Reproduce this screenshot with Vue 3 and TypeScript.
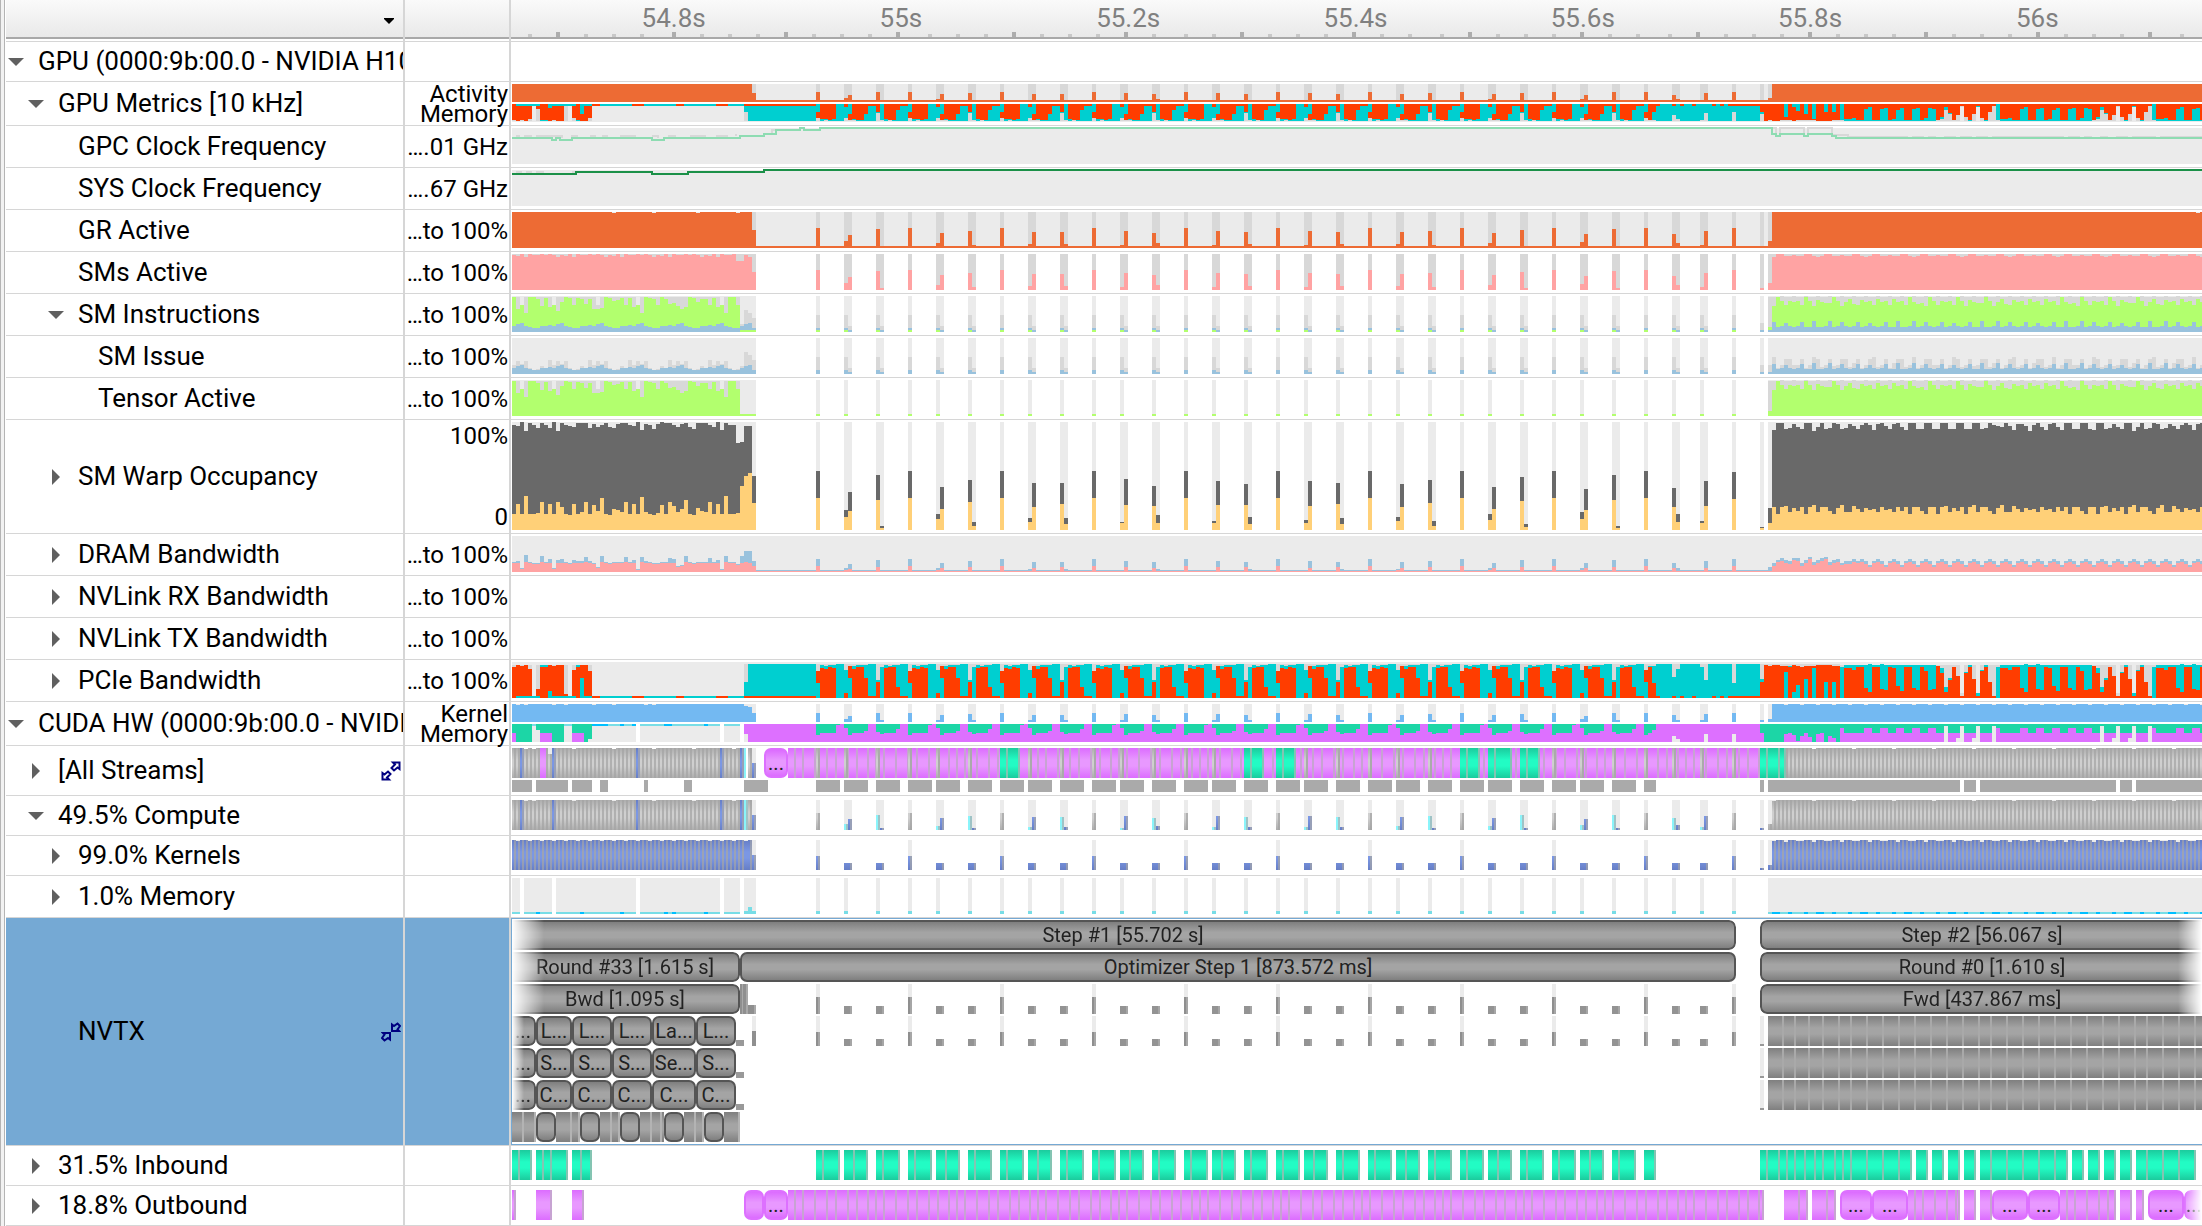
<script setup lang="ts">
type Box = [x: number, width: number, top: number, height: number]
type Heights = Record<number, number>
interface Layer { fill: string; d: string }
interface Span { width: number; text?: string; kind: string }
interface Track { height: number; layers: Layer[]; spans: Span[] }
interface Row {
  name: string
  level: number
  arrow?: 'open' | 'closed'
  icon?: 'expand' | 'collapse'
  values?: string[]
  kind: string
  tracks: Track[]
}

const WIDTH = 1690
const CELL = 4
const LAST = 422
const LIGHT = '#ebebeb'
const DARK = '#d8d8d8'
const ORANGE = '#ed6b34'
const PINK = '#ffa3a3'
const LIME = '#b2ff6e'
const BLUE = '#99c2dd'
const CYAN = '#00cfd0'
const RED = '#ff3d00'
const PURPLE = '#dd70ff'
const TEAL = '#1cd6a6'
const AQUA = '#78dde6'

const layer = (fill: string, boxes: Box[]): Layer => ({
  fill,
  d: boxes.map(([x, w, y, h]) => `M${x} ${y}h${w}v${h}h${-w}z`).join(''),
})
const range = (from: number, to: number) => Array.from({ length: to - from + 1 }, (_, i) => from + i)
const up = (fill: string, h: Heights, total: number): Layer =>
  layer(fill, Object.keys(h).map(Number).map((i): Box => [i * CELL, CELL, total - h[i], h[i]]))
const down = (fill: string, h: Heights): Layer =>
  layer(fill, Object.keys(h).map(Number).map((i): Box => [i * CELL, CELL, 0, h[i]]))
const full = (cells: number[], h: number): Heights => Object.fromEntries(cells.map((i) => [i, h]))
const scale = (h: Heights, f: number, min = 1): Heights =>
  Object.fromEntries(Object.entries(h).map(([i, v]) => [i, Math.max(min, Math.round(v * f))]))
const ground = (fill: string, h: number): Layer => layer(fill, [[0, WIDTH, 0, h]])
const track = (height: number, layers: Layer[], spans: Span[] = []): Track => ({ height, layers, spans })

// Short bursts between the two busy phases: [cell, total occupancy, active occupancy]
const pairs = [
  [20, 13, 38, 19, 55, 30, 4, 2],
  [16, 11, 43, 21, 50, 28, 8, 4],
  [12, 8, 47, 23, 47, 26, 12, 6],
  [8, 7, 51, 25, 44, 24, 15, 7],
  [9, 7, 49, 25, 46, 25, 13, 6],
  [10, 7, 49, 24, 47, 26, 12, 6],
  [13, 9, 46, 23, 50, 27, 9, 4],
  [16, 10, 43, 21, 53, 29, 6, 3],
  [18, 11, 41, 20, 55, 30, 4, 2],
]
const bursts: number[][] = []
const singles: number[] = []
const firsts: number[] = []
const seconds: number[] = []
pairs.forEach((p, k) => {
  const a = 76 + 23 * k
  bursts.push([a, 59, 32], [a + 7, p[0], p[1]], [a + 8, p[2], p[3]], [a + 15, p[4], p[5]], [a + 16, p[6], p[7]])
  singles.push(a)
  firsts.push(a + 7, a + 15)
  seconds.push(a + 8, a + 16)
})
bursts.push([283, 59, 32], [290, 42, 23], [291, 16, 8], [297, 9, 7], [298, 49, 24], [305, 58, 31], [312, 3, 2], [314, 22, 7])
singles.push(283, 305)
firsts.push(290, 297)
seconds.push(291, 298)
const burstCells = bursts.map((b) => b[0])
const burstHeights = (f: number, min: number): Heights =>
  Object.fromEntries(bursts.map(([i, h]) => [i, Math.max(min, Math.round(h * f))]))

const left = range(0, 60)
const right = range(315, LAST)
const busy = [...left, ...burstCells, ...right]

// SM warp occupancy
const gapLeft = [3, 4, 0, 9, 1, 3, 6, 1, 3, 6, 0, 9, 1, 3, 4, 5, 1, 1, 1, 6, 2, 5, 3, 1, 5, 6, 2, 1, 1, 3, 4, 0, 8, 2, 3, 7, 2, 0, 1, 1, 3, 5, 2, 1, 5, 7, 1, 1, 1, 3, 5, 0, 8, 1, 3, 3, 21, 20, 4, 4, 54]
const warmLeft = [16, 26, 16, 34, 16, 16, 17, 28, 16, 26, 16, 28, 23, 16, 15, 26, 16, 18, 28, 16, 25, 19, 32, 16, 15, 21, 20, 18, 28, 16, 26, 16, 33, 18, 16, 15, 17, 25, 16, 28, 24, 18, 21, 30, 16, 15, 22, 19, 18, 28, 16, 26, 16, 34, 16, 16, 17, 44, 54, 57, 27]
const gapRight = [8, 1, 1, 7, 6, 2, 5, 7, 1, 1, 9, 5, 1, 7, 6, 1, 2, 7, 6, 2, 4, 7, 3, 1, 3, 8, 2, 1, 4, 7, 2, 1, 5, 8, 1, 1, 7, 7, 1, 1, 7, 7, 1, 1, 7, 7, 1, 1, 7, 7, 1, 1, 7, 6, 1, 3, 4, 5, 1, 4, 8, 2, 2, 4, 9, 3, 1, 5, 8, 2, 1, 5, 8, 1, 1, 7, 7, 1, 1, 7]
const warmRight = [23, 16, 23, 24, 18, 22, 19, 23, 16, 23, 25, 18, 23, 23, 19, 16, 22, 25, 18, 18, 24, 21, 18, 22, 20, 21, 18, 23, 20, 21, 18, 23, 19, 23, 16, 23, 23, 19, 16, 23]
const warpTop: Heights = {}
const warpWarm: Heights = {}
left.forEach((i) => { warpTop[i] = 108 - gapLeft[i]; warpWarm[i] = warmLeft[i] })
bursts.forEach(([i, h, w]) => { warpTop[i] = h; warpWarm[i] = w })
right.forEach((i) => {
  warpTop[i] = 108 - gapRight[(i - 315) % gapRight.length]
  warpWarm[i] = warmRight[(i - 315) % warmRight.length]
})

// GR and SM activity
const grHeights: Heights = { ...full(range(0, 59), 36), 60: 18, ...burstHeights(0.34, 2), ...full(right, 36) }
;[25, 35, 46, 56, 421].forEach((i) => { grHeights[i] = 35 })
const smsHeights: Heights = { ...burstHeights(0.34, 2) }
left.forEach((i) => { smsHeights[i] = 36 - [1, 2, 0, 3, 0, 1, 1, 0, 1, 0, 1, 3][i % 12] })
smsHeights[56] = 29
smsHeights[57] = 29
smsHeights[60] = 18
right.forEach((i) => { smsHeights[i] = i === 315 ? 33 : 36 - [0, 0, 2, 2, 1, 2, 2, 0, 0, 2, 3, 2][(i - 316) % 12] })

// Tensor pipe and instruction issue
const tensorGap = [1, 13, 9, 17, 1, 1, 3, 10, 2, 11, 9, 15, 6, 1, 2, 9, 2, 3, 8, 3, 13, 13, 12, 1, 2, 5, 4, 2, 9, 2, 11, 9, 17, 1, 2, 3, 9, 1, 3, 8, 7, 10, 13, 11, 1, 2, 6, 3, 3, 9, 2, 11, 9, 17, 1, 1, 9]
const tensorGapRight = [10, 1, 5, 9, 5, 6, 5, 9, 1, 5, 10, 4, 6, 7, 7, 1, 5, 10, 6, 3, 8, 9, 4, 6, 5, 9, 3, 6, 5, 9, 3, 6, 5, 9, 1, 6, 8, 7]
const tensor: Heights = {}
const tensorMax: Heights = {}
const issue: Heights = {}
const issueMax: Heights = {}
left.forEach((i) => {
  tensor[i] = i < 57 ? 36 - tensorGap[i] : 2
  tensorMax[i] = i < 57 ? ([2, 10, 21, 31, 52].includes(i) ? 27 : 35) : 2
  issue[i] = i < 57 ? [6, 8, 9, 6, 5, 4, 4, 6, 6, 7][i % 10] : [6, 8, 9, 4][i - 57]
  issueMax[i] = i < 57 ? [9, 13, 10, 13, 6, 4, 5, 8, 6, 14][i % 10] : [8, 22, 19, 14][i - 57]
})
right.forEach((i) => {
  tensor[i] = 36 - tensorGapRight[(i - 315) % tensorGapRight.length]
  tensorMax[i] = [35, 35, 36][i % 3]
  issue[i] = [10, 5, 6, 9, 6, 5, 6, 10, 5, 5, 11, 5, 5, 6, 11, 5, 6, 10, 6, 5, 6][(i - 315) % 21]
  issueMax[i] = [15, 6, 9, 15, 15, 7, 9][(i - 315) % 7] + (i % 5 === 0 ? 2 : 0)
})
const tensorCells = [...singles, ...firsts]
tensorCells.forEach((i) => { tensor[i] = 2; issue[i] = 4; issueMax[i] = 17 })
seconds.forEach((i) => { issue[i] = 2; issueMax[i] = 6 })
issue[312] = 2
issueMax[312] = 9
issue[314] = 2
issueMax[314] = 9
tensor[314] = 5
tensorMax[314] = 35
const instrMax: Heights = { ...issueMax }
range(0, 56).forEach((i) => { instrMax[i] = tensorMax[i] })
range(314, LAST).forEach((i) => { instrMax[i] = tensorMax[i] })
const instrTensor: Heights = Object.fromEntries([...range(0, 56), ...range(314, LAST)].map((i) => [i, tensor[i]]))
const instrLow: Heights = full([57, 58, 59, 60, ...tensorCells], 2)

// DRAM
const dramTop: Heights = full(range(0, LAST), 2)
const dramRead: Heights = full(range(0, LAST), 1)
const dramLeft = [10, 11, 4, 17, 10, 9, 9, 16, 10, 13, 4, 12, 13, 10, 9, 12, 11, 11, 15, 11, 9, 5, 16, 10, 9, 10, 10, 10, 15, 10, 12, 3, 15, 11, 10, 9, 9, 10, 10, 14, 13, 6, 7, 16, 10, 9, 10, 10, 10, 14, 10, 12, 3, 16, 10, 10, 8, 16, 21, 21, 11]
dramLeft.forEach((h, i) => {
  dramTop[i] = h
  dramRead[i] = i > 56 ? [9, 10, 9, 6][i - 57] : h > 14 ? 10 : h > 10 ? 9 : Math.max(2, h - 1)
})
bursts.forEach(([i, h, w]) => { dramTop[i] = Math.max(2, Math.round(h * 0.22)); dramRead[i] = Math.max(1, Math.round(w * 0.18)) })
const dramStart = [9, 12, 14, 12, 11, 14, 14, 9, 12, 15, 10, 12, 14, 15, 10, 12, 13, 9, 11, 11, 13]
right.forEach((i) => {
  const n = i - 315
  dramTop[i] = n < 21 ? dramStart[n] : [7, 11, 13, 11][n % 4]
  dramRead[i] = dramTop[i] - (n % 4 === 1 ? 2 : 3)
  if (dramTop[i] === 7) dramRead[i] = 5
})

// PCIe: grey maximum, then two directions, the lower one painted last
const peak: Heights = {}
const rx: Heights = {}
const tx: Heights = {}
const frontRx: Heights = {}
const frontTx: Heights = {}
const pcie = (i: number, r: number, c: number, p = 34) => {
  if (i > LAST) return
  peak[i] = p
  if (r > c) { rx[i] = r; if (c) frontTx[i] = c } else { tx[i] = c; if (r) frontRx[i] = r }
}
const pcieLeft: number[][] = [
  [31, 0], [33, 2], [32, 2], [33, 2], [29, 2], [0, 2], [9, 2], [31, 33], [31, 33], [33, 7], [32, 2], [33, 2], [33, 2], [4, 2], [0, 2],
  [28, 2], [31, 33], [33, 20], [33, 2], [27, 2],
]
pcieLeft.forEach(([r, c], i) => pcie(i, r, c, i === 5 || i === 14 ? 2 : 33))
range(20, 57).forEach((i) => {
  const red = [20, 21, 30, 31, 32, 41, 42, 51, 52, 53].includes(i)
  pcie(i, red ? 2 : 0, red ? 0 : 2, 2)
})
pcie(58, 2, 16)
range(59, 75).forEach((i) => pcie(i, 2, 34))
const pciePeriod: number[][] = [
  [27, 15], [30, 33], [29, 32], [31, 33], [30, 33], [0, 34], [0, 34], [5, 28], [32, 20], [29, 32], [31, 33], [31, 33],
  [20, 33], [2, 34], [2, 34], [16, 18], [0, 31], [30, 33], [31, 32], [31, 33], [11, 33], [2, 34], [2, 34],
]
range(76, 282).forEach((i) => { const [r, c] = pciePeriod[(i - 76) % 23]; pcie(i, r, c) })
pcie(283, 28, 16)
pcie(284, 31, 32)
pcie(285, 15, 32)
range(286, 311).forEach((i) => pcie(i, [286, 290, 292, 295, 300, 302].includes(i) || i > 303 ? 2 : 0, 34))
pcie(290, 2, 21)
pcie(291, 0, 29)
pcie(297, 0, 31)
pcie(298, 0, 18)
pcie(305, 2, 15)
pcie(312, 16, 19)
const pcieBusy: number[][] = [
  [33, 0], [32, 0], [33, 0], [33, 0], [32, 0], [32, 26], [31, 32], [33, 6], [32, 13], [31, 0], [32, 19], [32, 0], [32, 30], [33, 0],
  [33, 0], [33, 16], [33, 0], [32, 16], [32, 0],
]
pcieBusy.forEach(([r, c], n) => pcie(313 + n, r, c))
const pcieLoop: number[][] = [
  [0, 31], [30, 33], [30, 33], [28, 33], [31, 33], [31, 33], [10, 33], [6, 34], [31, 33], [31, 33], [9, 34], [8, 33], [31, 33],
  [30, 33], [12, 33], [7, 33], [31, 33], [31, 33], [10, 33], [8, 33], [31, 33], [27, 33], [8, 33], [9, 33], [32, 0], [25, 30],
  [6, 11], [18, 20], [31, 0], [22, 0], [2, 0], [25, 26], [31, 33], [19, 0], [2, 5], [27, 28], [31, 33], [16, 0], [2, 0],
]
range(332, LAST).forEach((i) => {
  const n = (i - 332) % 39
  const [r, c] = pcieLoop[n]
  pcie(i, r, c, n === 30 || n === 34 ? 5 : 33)
})
const half = (h: Heights) => scale(h, 0.5, 2)

// CUDA memory operations, hanging from the top
const h2d: Heights = {}
const d2h: Heights = {}
const small: Heights = full([...range(0, 57).filter((i) => ![31, 52, 57].includes(i))], 2)
;[0, 1, 2, 3, 4, 6, 7, 8, 9, 10, 11, 12, 15, 16, 17, 18, 19].forEach((i) => { h2d[i] = i === 19 ? 15 : i === 6 ? 6 : 18 })
;[0, 7, 8, 9, 15, 16, 17].forEach((i) => { d2h[i] = 9 })
const mixed = [11, 9, 9, 9, 9, 1, 0, 4, 11, 9, 9, 9, 7, 0, 0, 8, 10, 9, 9, 9, 5, 0, 0]
range(76, 282).forEach((i) => { h2d[i] = mixed[(i - 76) % 23] })
Object.assign(h2d, { 283: 11, 284: 9, 285: 6, 312: 9 })
const purpleDown: Heights = { 58: 10, ...full(range(59, 312), 18), 290: 12, 291: 15, 298: 10, 305: 10 }
const tealBusy = [18, 18, 18, 18, 18, 10, 9, 11, 17, 12, 9, 13, 18, 10, 9, 18, 12, 14, 18]
tealBusy.forEach((h, n) => { h2d[313 + n] = h; purpleDown[313 + n] = 18 })
range(332, LAST).forEach((i) => {
  const n = (i - 332) % 39
  const r = pcieLoop[n][0]
  const idle = [26, 30, 34, 38].includes(n)
  h2d[i] = idle ? 2 : r < 15 ? 4 : 9
  purpleDown[i] = idle ? 2 : n === 29 || n === 33 ? 14 : 18
})

// Kernel summary
const kernel: Heights = { ...burstHeights(0.155, 2), ...full(right, 18) }
left.forEach((i) => { kernel[i] = [1, 3, 10, 13, 20, 25, 33, 35].includes(i) ? 17 : 18 })
kernel[58] = 16
kernel[59] = 15
kernel[60] = 9
right.forEach((i) => { if (i % 4 === 2) kernel[i] = 17 })

// Compute streams
const streamMarks = [2, 10, 31, 52, 57]
const greyLeft = range(0, 59).filter((i) => !streamMarks.includes(i) && i !== 58)
const stripes = (fill: string, h: Heights, total: number): Layer =>
  layer(fill, Object.keys(h).map(Number).map((i): Box => [i * CELL + 2, 2, total - h[i], h[i]]))
const trimmed = (cells: number[], h: number): Heights =>
  Object.fromEntries(cells.map((i) => [i, i % 10 === 5 || i === 3 ? h - 1 : h]))
const computeGrey: Heights = { ...trimmed(greyLeft, 30), ...full(singles, 17), 314: 6, ...trimmed(right, 30) }
const streamsBusy: Heights = { ...trimmed(greyLeft, 30), 9: 24, ...trimmed(range(318, LAST), 30) }
const computeBlue: Heights = { ...full(streamMarks, 30), 60: 15, 312: 2, 291: 5, 298: 14 }
const computeCyan: Heights = { 58: 30, 290: 12, 297: 3 }
pairs.forEach((p, k) => {
  const a = 76 + 23 * k
  computeCyan[a + 7] = Math.round(p[0] * 0.28)
  computeBlue[a + 8] = Math.round(p[2] * 0.28)
  computeCyan[a + 15] = Math.round(p[4] * 0.28)
  computeBlue[a + 16] = Math.max(2, Math.round(p[6] * 0.25))
})
const kernels: Heights = { ...full(range(0, 59), 30), 60: 15, ...full(singles, 14), ...full([...firsts, ...seconds], 7), 312: 2, 314: 5, ...full(right, 30) }
right.forEach((i) => { kernels[i] = [29, 30, 30, 28, 30, 30, 29][i % 7] })
range(0, 59).forEach((i) => { if (i % 3 === 1) kernels[i] = 29 })
const kernelStripes: Heights = Object.fromEntries(Object.entries(kernels).filter(([i]) => !firsts.includes(+i) && +i !== 58))

// Memory copies
const copyGroups = (h: number): Box[] => {
  const out: Box[] = []
  singles.slice(0, 9).forEach((a) => [0, 7, 15].forEach((o) => out.push([(a + o) * CELL, 24, 0, h])))
  out.push([1132, 12, 0, h])
  return out
}
const rail: Box[] = [[0, 20, 0, 12], [24, 32, 0, 12], [60, 20, 0, 12], [88, 8, 0, 12], [132, 4, 0, 12], [172, 8, 0, 12], [232, 24, 0, 12],
  ...copyGroups(12), [1248, 4, 0, 12], [1256, 192, 0, 12], [1452, 12, 0, 12], [1468, 136, 0, 12], [1608, 12, 0, 12], [1624, 66, 0, 12]]
const box30 = (spans: number[][]): Box[] => spans.map(([a, b]) => [a, b - a, 0, 30])
const inboundRight = [[1248, 1400], [1404, 1416], [1420, 1432], [1436, 1448], [1452, 1464], [1468, 1556], [1560, 1572], [1576, 1588], [1592, 1604], [1608, 1620], [1624, 1684]]
const inbound: Box[] = [...box30([[0, 20], [24, 56], [60, 80]]), ...copyGroups(30), ...box30(inboundRight)]
const inboundCuts = [6, 30, 38, 68, 1254, 1266, 1274, 1282, 1292, 1302, 1310, 1322, 1330, 1338, 1354, 1370, 1386, 1478, 1494, 1510, 1526, 1542, 1634, 1650, 1666]
const inboundSeams: Box[] = [
  ...inbound.map(([x, w]): Box => [x + w - 2, 2, 0, 30]),
  ...copyGroups(30).slice(0, 27).map(([x], n): Box => [x + [6, 9, 6][n % 3], 2, 0, 30]),
  ...inboundCuts.map((x): Box => [x, 2, 0, 30]),
]
const seams = (from: number, to: number): Box[] => {
  const out: Box[] = []
  const steps = [8, 12, 12, 9, 12, 9, 11, 8]
  for (let x = from + 6, n = 0; x < to - 2; x += steps[n % 8], n++) out.push([x, 2, 0, 30])
  out.push([to - 2, 2, 0, 30])
  return out
}
const outSpans = [[0, 4], [24, 40], [60, 72], [276, 1252], [1272, 1296], [1300, 1324], [1396, 1448], [1452, 1464], [1468, 1480], [1548, 1604], [1608, 1620], [1624, 1632]]
const outSeams: Box[] = [[2, 2, 0, 30], [38, 2, 0, 30], [70, 2, 0, 30], ...seams(276, 1252), ...seams(1272, 1296).slice(1), ...seams(1300, 1324).slice(1),
  ...seams(1396, 1448), [1462, 2, 0, 30], [1478, 2, 0, 30], ...seams(1548, 1604), [1618, 2, 0, 30], [1630, 2, 0, 30]]
const streamTeal = [[488, 508], [732, 752], [764, 784], [948, 968], [976, 1000], [1008, 1028], [1248, 1274]]
const tealStarts = streamTeal.map((s) => s[0] / CELL)
const streamGrey = [...singles, ...firsts].filter((i) => !tealStarts.includes(i))
const tealSeams: Box[] = streamTeal.flatMap(([a, b]): Box[] => [[a + 6, 2, 0, 30], [b - 2, 2, 0, 30]])
tealSeams.push([1266, 2, 0, 30])

const memCells = range(0, 60).filter((i) => !streamMarks.includes(i))
const memPoints = [...singles, ...firsts]
const memBusy = range(314, LAST)

// NVTX detail rows
const gap = (width: number): Span => ({ width, kind: 'gap' })
const bar = (width: number, text: string, kind = 'grey'): Span => ({ width, text, kind })
const nvtxCuts = [1270, 1282, 1296, 1310, 1326, 1338, 1354, 1370, 1386, 1402, 1418, 1434, 1450, 1466, 1478, 1494, 1510, 1526, 1542, 1558, 1574, 1590, 1606, 1622, 1634, 1650, 1666, 1682]
const dense = (): Layer[] => [
  layer(LIGHT, [[1248, 4, 0, 28]]),
  layer('#999999', [[1248, 4, 28, 2], [224, 8, 24, 6]]),
  layer('url(#ash)', [[1256, 434, 0, 30]]),
  layer('#a9a9a9', nvtxCuts.map((x): Box => [x, 2, 0, 30])),
]
const ticks = (single: number, pair: number): Layer[] => [
  up(LIGHT, full(singles, 30), 30),
  up('#8f8f8f', full(singles, single), 30),
  up('#939393', full([...firsts, ...seconds], pair), 30),
  stripes('#a6a6a6', { ...full(singles, single), ...full(seconds, pair) }, 30),
]
const pieces = (texts: string[]): Span[] =>
  [24, 36, 40, 40, 44, 40].map((w, i) => bar(w, texts[i], i ? 'grey' : 'grey cut-left')).concat(gap(1466))
const pills: Span[] = [gap(24)]
;[24, 20, 24, 20].forEach((g) => pills.push(bar(20, ''), gap(g)))
pills.push(bar(20, ''), gap(1478))
const pillCuts = [10, 22, 58, 66, 98, 106, 138, 148, 182, 190, 226]

const gpcLine = 'M0 10H40V12H44V10H48V12H60V10H140V12H152V10H228V8H252V6H264V2H288V0H292V2H308V0H1260V6H1264V8H1268V6H1292V8H1296V6H1320V8H1324V10H1690'
const gpcMax = 'M4 8H8M12 8H20M24 8H50V10M60 10V8H66M78 8H84M90 8H96M108 8H124M140 8H146V10M156 8H164M178 8H194M204 8H216M224 8V6M260 6V2H264M1260 0H1264V8M1268 8V0H1292V8M1296 8V0H1320V7H1336V9H1396M1400 9H1412M1416 9H1424M1432 9H1444M1448 9H1460M1464 9H1476M1480 9H1552M1556 9H1568M1572 9H1580M1588 9H1596M1604 9H1616M1620 9H1644M1648 9H1690'
const sysLine = 'M0 4H64V2H140V4H176V2H252V0H1690'

const percent = ['…to 100%']
const rows: Row[] = [
  { name: 'GPU (0000:9b:00.0 - NVIDIA H100', level: 0, arrow: 'open', kind: 'short', tracks: [] },
  {
    name: 'GPU Metrics [10 kHz]', level: 1, arrow: 'open', values: ['Activity', 'Memory'], kind: 'double',
    tracks: [
      track(18, [ground(LIGHT, 18), up(DARK, full([60, ...burstCells], 18), 18), layer(ORANGE, [[0, WIDTH, 16, 2]]), up(ORANGE, scale(grHeights, 0.5, 2), 18)]),
      track(18, [ground(LIGHT, 18), down(DARK, half(peak)), down(RED, half(rx)), down(CYAN, half(tx)), down(RED, half(frontRx)), down(CYAN, half(frontTx))]),
    ],
  },
  { name: 'GPC Clock Frequency', level: 2, values: ['….01 GHz'], kind: 'normal gpc', tracks: [track(36, [ground(LIGHT, 36)])] },
  { name: 'SYS Clock Frequency', level: 2, values: ['….67 GHz'], kind: 'normal sys', tracks: [track(36, [ground(LIGHT, 36)])] },
  {
    name: 'GR Active', level: 2, values: percent, kind: 'normal',
    tracks: [track(36, [ground(LIGHT, 36), up(DARK, full([60, ...burstCells], 36), 36), layer(ORANGE, [[0, WIDTH, 34, 2]]), up(ORANGE, grHeights, 36)])],
  },
  { name: 'SMs Active', level: 2, values: percent, kind: 'normal', tracks: [track(36, [up(DARK, full(busy, 36), 36), up(PINK, smsHeights, 36)])] },
  {
    name: 'SM Instructions', level: 2, arrow: 'open', values: percent, kind: 'normal',
    tracks: [track(36, [up(LIGHT, full(busy, 36), 36), up(DARK, instrMax, 36), up(LIME, instrTensor, 36), up(BLUE, issue, 36), up(LIME, instrLow, 36)])],
  },
  { name: 'SM Issue', level: 3, values: percent, kind: 'normal', tracks: [track(36, [up(LIGHT, full(busy, 36), 36), up(DARK, issueMax, 36), up(BLUE, issue, 36)])] },
  {
    name: 'Tensor Active', level: 3, values: percent, kind: 'normal',
    tracks: [track(36, [up(LIGHT, full([...left, ...tensorCells, 314, ...right], 36), 36), up(DARK, tensorMax, 36), up(LIME, tensor, 36)])],
  },
  {
    name: 'SM Warp Occupancy', level: 2, arrow: 'closed', values: ['100%', '0'], kind: 'scale',
    tracks: [track(108, [up(LIGHT, full(busy, 108), 108), up('#696969', warpTop, 108), up('#ffd078', warpWarm, 108)])],
  },
  { name: 'DRAM Bandwidth', level: 2, arrow: 'closed', values: percent, kind: 'normal', tracks: [track(36, [ground(LIGHT, 36), up(BLUE, dramTop, 36), up(PINK, dramRead, 36)])] },
  { name: 'NVLink RX Bandwidth', level: 2, arrow: 'closed', values: percent, kind: 'normal', tracks: [track(36, [])] },
  { name: 'NVLink TX Bandwidth', level: 2, arrow: 'closed', values: percent, kind: 'normal', tracks: [track(36, [])] },
  {
    name: 'PCIe Bandwidth', level: 2, arrow: 'closed', values: percent, kind: 'normal',
    tracks: [track(36, [ground(LIGHT, 36), up(DARK, peak, 36), up(RED, rx, 36), up(CYAN, tx, 36), up(RED, frontRx, 36), up(CYAN, frontTx, 36)])],
  },
  {
    name: 'CUDA HW (0000:9b:00.0 - NVIDIA', level: 0, arrow: 'open', values: ['Kernel', 'Memory'], kind: 'double',
    tracks: [
      track(18, [up(LIGHT, full(busy, 18), 18), up('#73b9f2', kernel, 18)]),
      track(18, [
        up(LIGHT, full([...range(0, 30), ...range(32, 51), ...range(53, 56), ...range(58, LAST)], 18), 18),
        down(AQUA, small), layer('#00bfff', [[80, 16, 0, 2], [108, 4, 0, 2], [120, 4, 0, 2], [152, 8, 0, 2], [192, 4, 0, 2]]),
        down(PURPLE, purpleDown), down(TEAL, h2d), up(PURPLE, d2h, 18),
      ]),
    ],
  },
  {
    name: '[All Streams]', level: 1, arrow: 'closed', icon: 'expand', kind: 'streams',
    tracks: [
      track(30, [
        up(LIGHT, full([9, 60], 30), 30),
        up('url(#silver)', streamsBusy, 30), stripes('url(#steel)', streamsBusy, 30),
        up('url(#indigo)', { ...full(streamMarks, 30), 60: 15 }, 30), stripes('#98a0b8', { ...full(streamMarks, 30), 60: 15 }, 30),
        layer('#8af4fa', [[232, 2, 0, 30]]),
        layer('url(#violet)', [...box30([[276, 1248]]), [28, 6, 0, 30]]), layer('#c7a3d2', seams(276, 1248)),
        up('url(#silver)', full(streamGrey, 30), 30), stripes('#aaaaaa', full(streamGrey, 30), 30),
        layer('url(#mint)', box30(streamTeal)), layer('#84c4b2', tealSeams),
      ], [gap(252), bar(24, '...', 'violet'), gap(1414)]),
      track(12, [layer('#aaaaaa', rail)]),
    ],
  },
  {
    name: '49.5% Compute', level: 1, arrow: 'open', kind: 'short lower',
    tracks: [track(30, [
      up(LIGHT, full(busy, 30), 30), up('url(#silver)', computeGrey, 30), stripes('url(#steel)', computeGrey, 30),
      up('url(#indigo)', computeBlue, 30), stripes('#98a0b8', computeBlue, 30),
      up('#8af4fa', computeCyan, 30), stripes('#9fc3c6', computeCyan, 30),
    ])],
  },
  {
    name: '99.0% Kernels', level: 2, arrow: 'closed', kind: 'short lower',
    tracks: [track(30, [up(LIGHT, full([...left, ...singles, 312, 314, ...right], 30), 30), up('url(#indigo)', kernels, 30), stripes('url(#slate)', kernelStripes, 30)])],
  },
  {
    name: '1.0% Memory', level: 2, arrow: 'closed', kind: 'normal',
    tracks: [track(36, [
      up(LIGHT, full([...memCells, ...memPoints, ...memBusy], 36), 36), up(AQUA, { ...full([...memCells, ...memBusy], 2), ...full(memPoints, 3), 58: 3, 59: 7, 60: 3 }, 36),
      up('#00bfff', { ...full([6, 17, 27, 38, 40, 48], 2), ...full(memBusy.filter((i) => [0, 4, 7, 8].includes(i % 11)), 2) }, 36),
    ])],
  },
  {
    name: 'NVTX', level: 2, icon: 'collapse', kind: 'selected',
    tracks: [
      track(30, [], [bar(1224, 'Step #1 [55.702 s]', 'grey fade-left'), gap(24), bar(442, 'Step #2 [56.067 s]', 'grey fade-right')]),
      track(30, [], [bar(228, 'Round #33 [1.615 s]', 'grey fade-left'), bar(996, 'Optimizer Step 1 [873.572 ms]'), gap(24), bar(442, 'Round #0 [1.610 s]', 'grey fade-right')]),
      track(30, [...ticks(17, 8), layer('#8f8f8f', [[228, 8, 0, 30], [236, 6, 21, 9]]), layer('#a9a9a9', [[230, 1, 0, 30], [234, 2, 0, 30], [242, 2, 21, 9]])],
        [bar(228, 'Bwd [1.095 s]', 'grey fade-left'), gap(1020), bar(442, 'Fwd [437.867 ms]', 'grey fade-right')]),
      track(30, [...ticks(14, 7), ...dense(), layer(LIGHT, [[240, 4, 0, 30]]), layer('#8f8f8f', [[240, 4, 15, 15]])], pieces(['...', 'L...', 'L...', 'L...', 'La...', 'L...'])),
      track(30, dense(), pieces(['...', 'S...', 'S...', 'S...', 'Se...', 'S...'])),
      track(30, dense(), pieces(['...', 'C...', 'C...', 'C...', 'C...', 'C...'])),
      track(30, [layer('url(#ash)', box30([[0, 24], [44, 68], [88, 108], [128, 152], [172, 192], [212, 228]])), layer('#b3b3b3', pillCuts.map((x): Box => [x, 2, 0, 30]))], pills),
    ],
  },
  { name: '31.5% Inbound', level: 1, arrow: 'closed', kind: 'short lower', tracks: [track(30, [layer('url(#mint)', inbound), layer('#84c4b2', inboundSeams)])] },
  {
    name: '18.8% Outbound', level: 1, arrow: 'closed', kind: 'short lower',
    tracks: [track(30, [layer('url(#violet)', box30(outSpans)), layer('#c7a3d2', outSeams)], [
      gap(232), bar(20, '', 'violet'), bar(24, '...', 'violet'), gap(1052), bar(32, '...', 'violet'), bar(36, '...', 'violet'), gap(84),
      bar(36, '...', 'violet'), bar(32, '...', 'violet'), gap(88), bar(36, '...', 'violet'), bar(18, '...', 'violet cut-right'),
    ])],
  },
]

const gradients = [
  ['silver', '#adadad', '#cfcfcf'], ['steel', '#a6a6a6', '#b0b0b0'], ['indigo', '#667ec6', '#7b97e4'], ['slate', '#8e97b4', '#9ba3b6'],
  ['violet', '#dc6cff', '#e898ff'], ['mint', '#1bcb9d', '#22fcc4'], ['ash', '#7f7f7f', '#a4a4a4'],
]

// Ruler: one tick in four is a tenth of a second
const minorTicks: Box[] = []
const majorTicks: Box[] = []
for (let n = 0; n < 60; n++) {
  const x = Math.round((16 + n * 28.45) / 4) * 4
  if (n % 4 === 1) majorTicks.push([x, 4, 32, 5])
  else minorTicks.push([x, 4, 34, 3])
}
const rulerLayers = [layer('#c8c8c8', minorTicks), layer('#adadad', majorTicks)]
const times = ['54.8s', '55s', '55.2s', '55.4s', '55.6s', '55.8s', '56s']
</script>

<template>
  <main class="timeline">
    <svg class="defs" aria-hidden="true">
      <defs>
        <linearGradient v-for="g in gradients" :id="g[0]" :key="g[0]" gradientUnits="userSpaceOnUse" x1="0" y1="0" x2="0" y2="30">
          <stop offset="0" :stop-color="g[1]" />
          <stop offset="0.4" :stop-color="g[2]" />
          <stop offset="0.6" :stop-color="g[2]" />
          <stop offset="1" :stop-color="g[1]" />
        </linearGradient>
      </defs>
    </svg>

    <header class="row head">
      <div class="label"><button class="menu" aria-label="Row options"><svg width="10" height="6" viewBox="0 0 10 6"><path d="M0 0h10v1L5 6 0 1z" /></svg></button></div>
      <div class="value"></div>
      <div class="plot ruler">
        <svg :viewBox="`0 0 ${WIDTH} 37`" preserveAspectRatio="none" shape-rendering="crispEdges">
          <path v-for="(l, i) in rulerLayers" :key="i" :d="l.d" :fill="l.fill" />
        </svg>
        <div class="times"><span v-for="t in times" :key="t">{{ t }}</span></div>
      </div>
    </header>

    <section v-for="r in rows" :key="r.name" class="row" :class="r.kind">
      <div class="label" :class="`level-${r.level}`">
        <button v-if="r.arrow" class="toggle" :aria-label="`Toggle ${r.name}`" :aria-expanded="r.arrow === 'open'">
          <svg width="16" height="16" viewBox="0 0 16 16"><path :d="r.arrow === 'open' ? 'M0 4h16L8 12z' : 'M4 0v16l8-8z'" /></svg>
        </button>
        <span v-else class="toggle"></span>
        <span class="name">{{ r.name }}</span>
        <button v-if="r.icon" class="resize" :aria-label="`${r.icon} ${r.name}`">
          <svg width="20" height="20" viewBox="0 0 20 20">
            <g v-if="r.icon === 'expand'">
              <path d="M12 1.5h6.5V8l-2-1.5-3.5 3-2.5-2.5 3.5-3.5z" /><path d="M8 18.5H1.5V12l2 1.5 3.5-3 2.5 2.5-3.5 3.5z" />
            </g>
            <g v-else>
              <path d="M11 9V2.500l2 1.500 3.500-2.500 2.500 2.500-2.500 3.500 1.500 1.500z" /><path d="M9 11v6.500l-2-1.500-3.500 2.500L1 16l2.500-3.500L2 11z" />
            </g>
          </svg>
        </button>
      </div>
      <div class="value"><span v-for="v in r.values" :key="v">{{ v }}</span></div>
      <div class="plot">
        <div v-for="(t, n) in r.tracks" :key="n" class="track">
          <svg :viewBox="`0 0 ${WIDTH} ${t.height}`" :style="{ height: `${t.height}px` }" preserveAspectRatio="none" shape-rendering="crispEdges">
            <path v-for="(l, i) in t.layers" :key="i" :d="l.d" :fill="l.fill" />
            <g v-if="r.kind === 'normal gpc'" class="line">
              <path :d="gpcMax" stroke="#d8d8d8" /><path :d="gpcLine" stroke="#8edcb2" />
            </g>
            <g v-if="r.kind === 'normal sys'" class="line">
              <path d="M4 2H10M14 2H20M24 2H32M60 2H64" stroke="#d8d8d8" /><path :d="sysLine" stroke="#1b9048" />
            </g>
          </svg>
          <div v-if="t.spans.length" class="spans">
            <div v-for="(s, i) in t.spans" :key="i" class="span" :class="s.kind" :style="{ width: `${(s.width / WIDTH) * 100}%` }">{{ s.text }}</div>
          </div>
        </div>
      </div>
    </section>
  </main>
</template>

<style>
body {
  margin: 0;
  background: #fff;
}
</style>

<style scoped>
* {
  box-sizing: border-box;
}
.timeline {
  border-left: 1px solid #b4b4b4;
  padding-left: 5px;
  background: linear-gradient(90deg, #f2f2f2 0 3px, #b4b4b4 3px 4px, #fff 4px);
  color: #000;
  font-family: Roboto, "Noto Sans", sans-serif;
  font-size: 26px;
  line-height: 30px;
  overflow: hidden;
}
.defs {
  position: absolute;
  width: 0;
  height: 0;
}
button {
  padding: 0;
  border: 0;
  background: none;
  display: block;
}
svg {
  display: block;
}
.row {
  display: grid;
  grid-template-columns: 399px 106px minmax(0, 1fr);
  border-bottom: 1px solid #d6d6d6;
}
.head {
  height: 42px;
  background: linear-gradient(#fafafa, #e9e9e9 37px, #a9a9a9 37px 39px, #fff 39px);
}
.short {
  height: 40px;
}
.normal {
  height: 42px;
}
.double {
  height: 44px;
}
.streams {
  height: 50px;
}
.scale {
  height: 114px;
}
.selected {
  height: 228px;
}
.label {
  display: flex;
  align-items: center;
  gap: 14px;
  padding-left: 2px;
  border-right: 2px solid #d6d6d6;
  overflow: hidden;
  white-space: nowrap;
}
.level-1 {
  padding-left: 22px;
}
.level-2 {
  padding-left: 42px;
}
.level-3 {
  padding-left: 62px;
}
.toggle {
  flex: none;
  width: 16px;
}
.toggle path {
  fill: #606060;
}
.name {
  flex: 1;
  min-width: 0;
  padding-bottom: 2px;
  overflow: hidden;
}
.menu {
  margin-left: auto;
  padding-right: 9px;
}
.resize {
  flex: none;
  padding-right: 2px;
}
.resize path {
  fill: none;
  stroke: #000080;
  stroke-width: 2;
}
.value {
  display: flex;
  flex-direction: column;
  justify-content: center;
  align-items: flex-end;
  padding-right: 1px;
  border-right: 2px solid #d6d6d6;
  font-size: 24px;
  line-height: 30px;
  white-space: nowrap;
}
.double .value {
  line-height: 20px;
}
.scale .value {
  justify-content: space-between;
  padding-top: 1px;
  padding-bottom: 1px;
}
.plot {
  display: flex;
  flex-direction: column;
  gap: 2px;
  padding: 2px 0 0 1px;
}
.lower .plot {
  padding-top: 4px;
}
.selected .label,
.selected .value {
  background: #75a9d4;
}
.selected .plot {
  padding: 1px 0 0;
  border: solid #75a9d4;
  border-width: 1px 0 1px 1px;
}
.track {
  display: grid;
  grid-template-columns: minmax(0, 1fr);
}
.track > svg,
.spans {
  grid-area: 1 / 1;
}
.plot svg {
  width: 100%;
  overflow: visible;
}
.line {
  fill: none;
  stroke-width: 2;
}
.spans {
  display: flex;
  min-width: 0;
}
.span {
  flex: none;
  height: 30px;
  border-radius: 7px;
  overflow: hidden;
  color: #222;
  font-size: 20px;
  line-height: 26px;
  text-align: center;
  white-space: nowrap;
}
.grey {
  border: 2px solid #555;
  background: linear-gradient(#7f7f7f, #a4a4a4 40%, #a4a4a4 60%, #7f7f7f);
}
.violet {
  border: 2px solid #dd70ff;
  background: linear-gradient(#dc6cff, #e898ff 40%, #e898ff 60%, #dc6cff);
}
.fade-left {
  border-left: 0;
  border-radius: 0 7px 7px 0;
  mask-image: linear-gradient(90deg, transparent, #000 32px);
}
.fade-right {
  border-right: 0;
  border-radius: 7px 0 0 7px;
  mask-image: linear-gradient(270deg, transparent, #000 24px);
}
.cut-left {
  border-left: 0;
  border-radius: 0 7px 7px 0;
  mask-image: linear-gradient(90deg, transparent, #000 12px);
}
.cut-right {
  border-right: 0;
  border-radius: 7px 0 0 7px;
  mask-image: linear-gradient(270deg, transparent, #000 18px);
}
.ruler {
  display: grid;
  padding-top: 0;
}
.ruler > svg,
.times {
  grid-area: 1 / 1;
}
.ruler > svg {
  height: 37px;
}
.times {
  display: flex;
  padding: 0 51px 0 48px;
  color: #808080;
  font-size: 26px;
  line-height: 36px;
}
.times span {
  flex: 1 1 0;
  text-align: center;
}
</style>
